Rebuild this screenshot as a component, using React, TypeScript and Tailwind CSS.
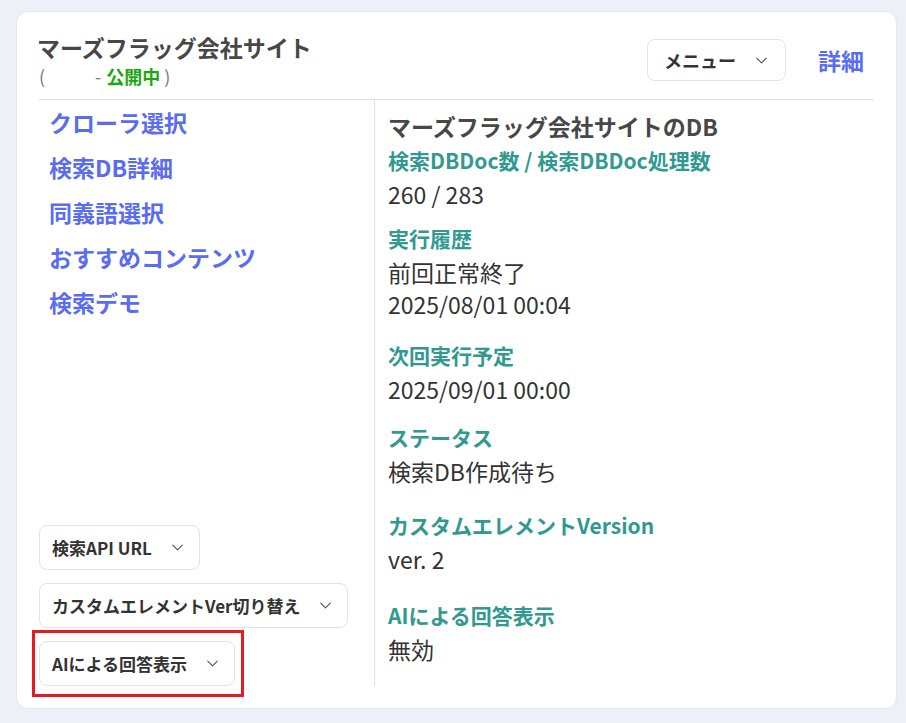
import React from 'react';
import { ChevronDown } from 'lucide-react';

type Section = {
  label: string;
  values: string[];
  gap: string;
};

const links = ['クローラ選択', '検索DB詳細', '同義語選択', 'おすすめコンテンツ', '検索デモ'];

// spacing above each block, measured from the screen
const sections: Section[] = [
  { label: '検索DBDoc数 / 検索DBDoc処理数', values: ['260 / 283'], gap: 'mt-0' },
  { label: '実行履歴', values: ['前回正常終了', '2025/08/01 00:04'], gap: 'mt-[11px]' },
  { label: '次回実行予定', values: ['2025/09/01 00:00'], gap: 'mt-[18px]' },
  { label: 'ステータス', values: ['検索DB作成待ち'], gap: 'mt-[15px]' },
  { label: 'カスタムエレメントVersion', values: ['ver. 2'], gap: 'mt-[21px]' },
  { label: 'AIによる回答表示', values: ['無効'], gap: 'mt-[23px]' },
];

const SelectButton = ({ text }: { text: string }) => (
  <button className="flex h-[45px] items-center gap-[16px] rounded-[8px] border border-[#e3e3e3] bg-white px-[12px] text-[17px] font-bold text-[#333]">
    <span>{text}</span>
    <ChevronDown size={19} strokeWidth={1.4} className="text-[#555]" />
  </button>
);

const App = () => {
  return (
    <div className="min-h-screen bg-[#edf0f7] pl-[16px] pr-[9px] pt-[11px] font-['Noto_Sans_CJK_JP','Noto_Sans',sans-serif]">
      <div className="flex h-[698px] flex-col rounded-[12px] border border-[#e3e6ee] bg-white px-[22px] pb-[22px]">
        {/* header */}
        <div className="flex items-start justify-between border-b border-[#e2e2e2] pb-[9px] pt-[20px]">
          <div className="-ml-[2px]">
            <div className="text-[23px] font-bold leading-[30px] text-[#474747]">マーズフラッグ会社サイト</div>
            <div className="flex items-center text-[18px] leading-[28px] text-[#777]">
              <span className="ml-[2px]">(</span>
              <span className="w-[50px]" />
              <span>-</span>
              <span className="ml-[5px] font-bold text-[#1aa80e]">公開中</span>
              <span className="ml-[4px]">)</span>
            </div>
          </div>
          <div className="mt-[7px] flex items-center gap-[22px]">
            <button className="flex h-[42px] items-center gap-[16px] rounded-[8px] border border-[#e3e3e3] bg-white pl-[16px] pr-[14px] text-[18px] font-bold text-[#333]">
              <span>メニュー</span>
              <ChevronDown size={19} strokeWidth={1.4} className="text-[#555]" />
            </button>
            <button className="px-[10px] text-[23px] font-bold text-[#5a6cf0]">詳細</button>
          </div>
        </div>

        {/* body */}
        <div className="flex flex-1">
          <div className="flex w-[336px] flex-col justify-between border-r border-[#e2e2e2]">
            <div className="flex flex-col">
              {links.map((l) => (
                <a key={l} className="h-[45px] pl-[10px] text-[23px] font-bold leading-[45px] text-[#5a6cf0]">
                  {l}
                </a>
              ))}
            </div>
            <div className="flex flex-col items-start gap-[13px]">
              <SelectButton text="検索API URL" />
              <SelectButton text="カスタムエレメントVer切り替え" />
              <div className="relative">
                <SelectButton text="AIによる回答表示" />
                <span className="pointer-events-none absolute -bottom-[11px] -left-[7px] -right-[9px] -top-[11px] border-[3px] border-[#e31b23]" />
              </div>
            </div>
          </div>

          <div className="flex-1 pl-[13px] pt-[9px]">
            <div className="text-[23px] font-bold leading-[34px] text-[#474747]">マーズフラッグ会社サイトのDB</div>
            {sections.map((s) => (
              <div key={s.label} className={s.gap}>
                <div className="text-[21px] font-bold leading-[34px] text-[#31998f]">{s.label}</div>
                <div className="mt-[1px]">
                  {s.values.map((v) => (
                    <div key={v} className="text-[23px] leading-[32px] text-[#333]">
                      {v}
                    </div>
                  ))}
                </div>
              </div>
            ))}
          </div>
        </div>
      </div>
    </div>
  );
};

export default App;
